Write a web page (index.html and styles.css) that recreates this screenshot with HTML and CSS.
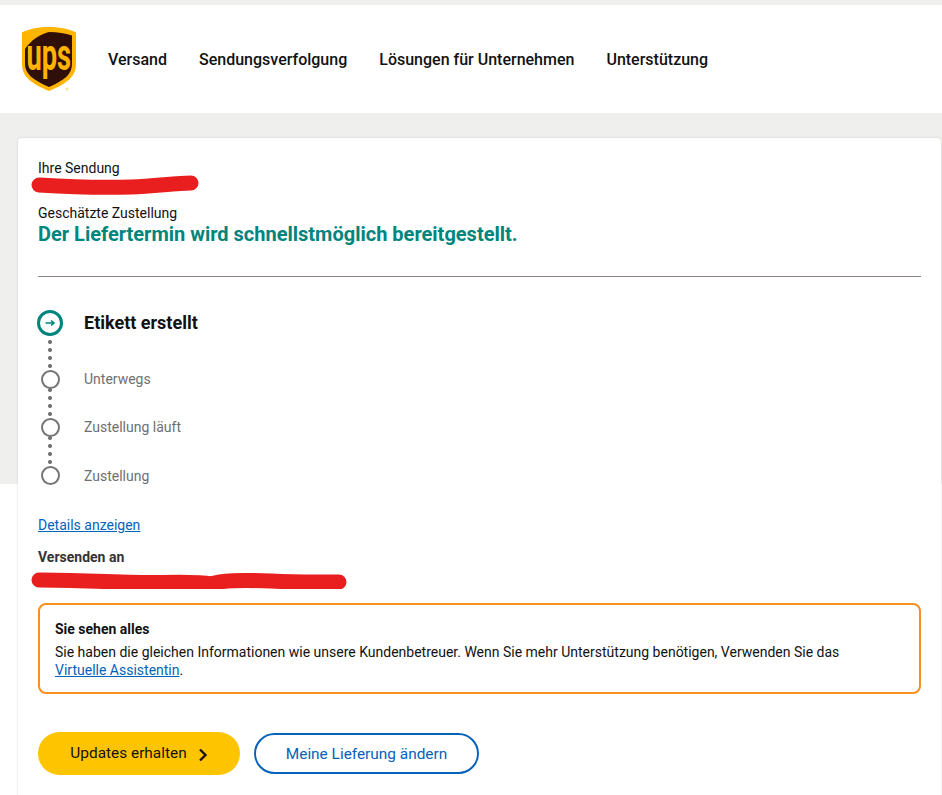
FILE: index.html
```html
<!DOCTYPE html>
<html lang="de">
	<head>
		<meta charset="utf-8">
		<title>UPS Sendungsverfolgung</title>
		<link rel="stylesheet" href="styles.css">
	</head>
	<body>
		<header class="topbar">
			<svg class="logo" width="54" height="66" viewBox="0 0 54 66">
				<path d="M27 0C17 0 8 1.500 0 5.500V37C0 50 10 57 27 64C44 57 54 50 54 37V5.500C46 1.500 37 0 27 0Z" fill="#ffb500"/>
				<path d="M27 5C36 5 43 6.500 50 8.500V37C50 47 43 53 27 60C11 53 3 47 3 37V22C9 13 18 7.500 27 5Z" fill="#300f08"/>
				<text class="logo-text" transform="translate(4.500 43) scale(0.62 1)">ups</text>
				<circle cx="45" cy="62" r="1.500" fill="#ffdf90"/>
			</svg>
			<nav class="nav">
				<a href="#">Versand</a>
				<a href="#">Sendungsverfolgung</a>
				<a href="#">Lösungen für Unternehmen</a>
				<a href="#">Unterstützung</a>
			</nav>
		</header>

		<main class="card">
			<p class="label">Ihre Sendung</p>
			<svg class="scribble scribble-short" width="172" height="24" viewBox="0 0 172 24">
				<path d="M8 10C40 12 70 13 100 12C125 11 145 8 160 8" />
			</svg>

			<p class="label eta-label">Geschätzte Zustellung</p>
			<h1 class="eta">Der Liefertermin wird schnellstmöglich bereitgestellt.</h1>
			<hr class="rule">

			<ol class="steps">
				<li class="step step-current">
					<span class="marker">
						<svg width="26" height="26" viewBox="0 0 26 26">
							<circle cx="13" cy="13" r="11.500" fill="#fff" stroke="#00857d" stroke-width="3"/>
							<path d="M8.500 13H17M14 10.500L17 13L14 15.500" fill="none" stroke="#00857d" stroke-width="1.600"/>
						</svg>
					</span>
					<span class="step-text">Etikett erstellt</span>
				</li>
				<li class="step">
					<span class="marker"><span class="ring"></span></span>
					<span class="step-text">Unterwegs</span>
				</li>
				<li class="step">
					<span class="marker"><span class="ring"></span></span>
					<span class="step-text">Zustellung läuft</span>
				</li>
				<li class="step">
					<span class="marker"><span class="ring"></span></span>
					<span class="step-text">Zustellung</span>
				</li>
			</ol>

			<a class="link details" href="#">Details anzeigen</a>
			<p class="ship-to">Versenden an</p>
			<svg class="scribble scribble-long" width="320" height="24" viewBox="0 0 320 24">
				<path d="M8 15C50 15 90 18 130 17.500C150 17 170 17 180 19C190 15 210 15 240 16C265 17.500 290 17 308 17" />
			</svg>

			<section class="notice">
				<h2>Sie sehen alles</h2>
				<p>Sie haben die gleichen Informationen wie unsere Kundenbetreuer. Wenn Sie mehr Unterstützung benötigen, Verwenden Sie das<br><a class="link" href="#">Virtuelle Assistentin</a>.</p>
			</section>

			<div class="actions">
				<a class="btn btn-yellow" href="#">Updates erhalten
					<svg width="10" height="14" viewBox="0 0 10 14"><path d="M2 1.500L7.500 7L2 12.500" fill="none" stroke="#1c1310" stroke-width="2.400"/></svg>
				</a>
				<a class="btn btn-outline" href="#">Meine Lieferung ändern</a>
			</div>
		</main>
	</body>
</html>
```

FILE: styles.css
```css
* {
	box-sizing: border-box;
	font-family: "Roboto", "Liberation Sans", sans-serif;
}
html, body {
	margin: 0;
	padding: 0;
}
body {
	padding-top: 5px;
	height: 795px;
	overflow: hidden;
	background: linear-gradient(#efefee 484px, #fff 484px);
	color: #121212;
	font-size: 14px;
}
p {
	margin: 0;
}
.topbar {
	display: flex;
	align-items: flex-start;
	height: 108px;
	padding: 22px 0 0 22px;
	background-color: #fff;
}
.logo {
	flex: none;
}
.logo-text {
	font-family: "Roboto", sans-serif;
	font-size: 44px;
	font-weight: 700;
	fill: #ffb500;
}
.nav {
	display: flex;
	gap: 32px;
	margin-left: 32px;
	padding-top: 23px;
}
.nav a {
	color: #121212;
	font-size: 16px;
	font-weight: 500;
	line-height: 19px;
	text-decoration: none;
}
.card {
	margin: 25px 1px 0 18px;
	padding: 22px 20px 0 20px;
	height: 660px;
	background-color: #fff;
	border-radius: 4px 4px 0 0;
	box-shadow: 0 0 3px rgba(0, 0, 0, 0.12);
}
.label {
	line-height: 17px;
}
.scribble {
	display: block;
	margin-left: -7px;
}
.scribble path {
	fill: none;
	stroke: #e91e1e;
	stroke-width: 15px;
	stroke-linecap: round;
	stroke-linejoin: round;
}
.scribble-short {
	margin-top: -2px;
}
.scribble-long {
	margin-top: -1px;
}
.eta-label {
	margin-top: 6px;
}
.eta {
	margin: 0;
	color: #00857d;
	font-size: 20px;
	font-weight: 700;
	line-height: 24px;
}
.rule {
	margin: 30px 0 0 0;
	border: none;
	border-top: 1px solid #8f8784;
}
.steps {
	margin: 34px 0 0 0;
	padding: 0;
	list-style: none;
}
.step {
	display: flex;
	align-items: center;
	height: 48px;
	color: #6f6f6f;
}
.step-current {
	height: 24px;
	margin-bottom: 20px;
	color: #121212;
}
.step-text {
	margin-left: 21px;
	line-height: 18px;
}
.step:last-child .step-text {
	margin-top: 2px;
}
.step-current .step-text {
	font-size: 18px;
	font-weight: 700;
}
.marker {
	display: flex;
	justify-content: center;
	align-items: center;
	position: relative;
	width: 26px;
	height: 26px;
	margin-left: -1px;
}
.ring {
	position: relative;
	z-index: 1;
	width: 19px;
	height: 19px;
	background-color: #fff;
	border: 2px solid #757575;
	border-radius: 50%;
}
.step:not(.step-current) .marker::before {
	content: "";
	position: absolute;
	left: 10px;
	top: -28px;
	width: 6px;
	height: 32px;
	background: radial-gradient(circle, #757575 1.700px, transparent 2.300px) center top / 6px 8px repeat-y;
}
.link {
	color: #0662bb;
	text-decoration: underline;
}
.details {
	display: block;
	margin-top: 18px;
	line-height: 17px;
}
.ship-to {
	margin-top: 15px;
	font-weight: 700;
	color: #333;
	line-height: 17px;
}
.notice {
	margin-top: 14px;
	padding: 16px 15px 13px 15px;
	border: 2px solid #f7901e;
	border-radius: 8px;
	line-height: 18px;
}
.notice h2 {
	margin: 0 0 5px 0;
	font-size: 14px;
	font-weight: 700;
	line-height: 17px;
}
.actions {
	display: flex;
	align-items: center;
	gap: 14px;
	margin-top: 38px;
}
.btn {
	display: flex;
	justify-content: center;
	align-items: center;
	font-size: 15.4px;
	text-decoration: none;
	border-radius: 22px;
}
.btn-yellow {
	gap: 11px;
	width: 202px;
	height: 43px;
	padding-bottom: 2px;
	background-color: #ffc400;
	color: #121212;
}
.btn-yellow svg {
	margin-top: 5px;
}
.btn-outline {
	width: 225px;
	height: 41px;
	background-color: #fff;
	border: 2px solid #0662bb;
	color: #0662bb;
}
```
